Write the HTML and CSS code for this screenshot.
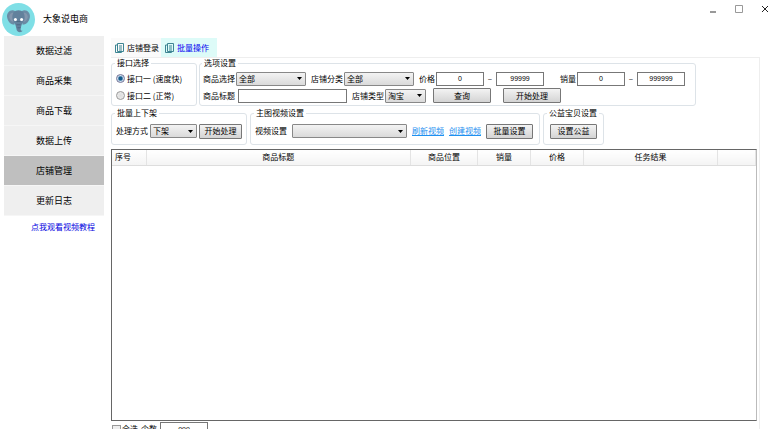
FILE: index.html
```html
<!doctype html>
<html lang="zh-CN">
  <head>
    <meta charset="UTF-8" />
    <meta name="viewport" content="width=device-width, initial-scale=1.0" />
    <title>大象说电商</title>
    <link rel="stylesheet" href="styles.css">
  </head>
  <body>
    <header class="titlebar">
      <svg class="logo" viewBox="0 0 32 32">
        <circle cx="16" cy="16" r="16" fill="#7fdfe6" />
        <path d="M13 8C9 5 4 9 5 14c1 5 4 7 7 7zM19 8c4-3 9 1 8 6-1 5-4 7-7 7z" fill="#6b8ba4" />
        <path d="M12 10c-3-2-5 1-5 4 1 3 3 5 5 4zM20 10c3-2 5 1 5 4-1 3-3 5-5 4z" fill="#8396ad" />
        <path d="M16 7c4 0 6 3 6 7 0 3-2 5-3 7l-1 4c0 2 1 2 2 2-1 2-6 2-6-2l-1-4c-1-2-3-4-3-7 0-4 2-7 6-7z" fill="#62819c" />
        <path d="M14 18h4M14 21h4M15 24h3" stroke="#4f6a84" fill="none" />
        <circle cx="13" cy="16" r="1.5" fill="#fff" />
        <circle cx="19" cy="16" r="1.5" fill="#fff" />
      </svg>
      <h1>大象说电商</h1>
      <div class="window-buttons">
        <button aria-label="最小化"><svg viewBox="0 0 8 8"><path d="M1 7h6" stroke-width="2" /></svg></button>
        <button aria-label="最大化"><svg viewBox="0 0 8 8"><path d="M.5.5h7v7h-7z" /></svg></button>
        <button class="close" aria-label="关闭"><svg viewBox="0 0 8 8"><path d="M1 1l6 6M7 1L1 7" /></svg></button>
      </div>
    </header>

    <div class="layout">
      <nav class="sidebar">
        <button>数据过滤</button>
        <button>商品采集</button>
        <button>商品下载</button>
        <button>数据上传</button>
        <button class="active">店铺管理</button>
        <button>更新日志</button>
        <a class="tutorial" href="#">点我观看视频教程</a>
      </nav>

      <main class="content">
        <div class="tabs">
          <button>
            <svg viewBox="0 0 9 10"><path d="M2.500.5h6v8h-6zM2.500 2h-2v7.500h6v-1M4 3h3M4 5h3M4 7h3" /></svg>店铺登录
          </button>
          <button class="active">
            <svg viewBox="0 0 9 10"><path d="M2.500.5h6v8h-6zM2.500 2h-2v7.500h6v-1M4 3h3M4 5h3M4 7h3" /></svg>批量操作
          </button>
        </div>

        <div class="panel">
          <div class="groups">
            <fieldset class="api">
              <legend>接口选择</legend>
              <label><input type="radio" name="api" checked />接口一 (速度快)</label>
              <label><input type="radio" name="api" />接口二 (正常)</label>
            </fieldset>
            <fieldset class="options">
              <legend>选项设置</legend>
              <div class="row">
                <label for="goods">商品选择</label>
                <select id="goods" class="md"><option>全部</option></select>
                <label class="gap-sm" for="category">店铺分类</label>
                <select id="category" class="md"><option>全部</option></select>
                <label class="gap-sm" for="priceMin">价格</label>
                <input type="text" id="priceMin" class="num" value="0" />
                <span class="dash">–</span>
                <input type="text" class="num" value="99999" aria-label="最高价格" />
                <label class="gap-lg" for="salesMin">销量</label>
                <input type="text" id="salesMin" class="num" value="0" />
                <span class="dash">–</span>
                <input type="text" class="num" value="999999" aria-label="最高销量" />
              </div>
              <div class="row">
                <label for="title">商品标题</label>
                <input type="text" id="title" class="title" />
                <label class="gap-sm" for="shopType">店铺类型</label>
                <select id="shopType" class="sm"><option>淘宝</option></select>
                <button class="btn wide">查询</button>
                <button class="btn wide gap-md">开始处理</button>
              </div>
            </fieldset>
          </div>

          <div class="groups second">
            <fieldset>
              <legend>批量上下架</legend>
              <div class="row">
                <label for="mode">处理方式</label>
                <select id="mode" class="mode"><option>下架</option></select>
                <button class="btn">开始处理</button>
              </div>
            </fieldset>
            <fieldset>
              <legend>主图视频设置</legend>
              <div class="row">
                <label for="video">视频设置</label>
                <select id="video" class="video"><option></option></select>
                <a class="link" href="#">刷新视频</a>
                <a class="link" href="#">创建视频</a>
                <button class="btn mid gap-sm">批量设置</button>
              </div>
            </fieldset>
            <fieldset>
              <legend>公益宝贝设置</legend>
              <div class="row">
                <button class="btn mid">设置公益</button>
              </div>
            </fieldset>
          </div>

          <div class="list">
            <table>
              <colgroup>
                <col class="c-index" />
                <col />
                <col class="c-place" />
                <col class="c-num" />
                <col class="c-num" />
                <col class="c-result" />
                <col class="c-end" />
              </colgroup>
              <thead>
                <tr>
                  <th class="left">序号</th>
                  <th>商品标题</th>
                  <th>商品位置</th>
                  <th>销量</th>
                  <th>价格</th>
                  <th>任务结果</th>
                  <th></th>
                </tr>
              </thead>
            </table>
          </div>

          <div class="row footer">
            <label><input type="checkbox" />全选</label>
            <label for="count">个数</label>
            <input type="text" id="count" class="num" value="999" />
          </div>
        </div>
      </main>
    </div>
  </body>
</html>
```
FILE: styles.css
```css
* {
  box-sizing: border-box;
}

body {
  display: flex;
  flex-direction: column;
  height: 100vh;
  margin: 0;
  overflow: hidden;
  background: #fff;
  color: #000;
  font: 8px/10px "Noto Sans CJK SC", sans-serif;
}

button,
input,
select {
  margin: 0;
  font: inherit;
  color: inherit;
}

.titlebar {
  display: flex;
  align-items: center;
  flex: none;
  height: 36px;
  padding: 2px 2px 0;
}

.logo {
  width: 33px;
  height: 33px;
}

.titlebar h1 {
  margin: 0 0 0 8px;
  font-size: 9px;
  font-weight: normal;
}

.window-buttons {
  display: flex;
  align-self: flex-start;
  gap: 18px;
  margin: 3px 3px 0 auto;
}

.window-buttons button {
  padding: 0;
  border: 0;
  background: none;
}

.window-buttons svg {
  display: block;
  width: 8px;
  height: 8px;
  fill: none;
  stroke: #999;
}

.window-buttons .close svg {
  stroke: #222;
}

.layout {
  display: flex;
  flex: 1;
  min-height: 0;
}

.sidebar {
  display: flex;
  flex-direction: column;
  flex: none;
  width: 100px;
  margin: 0 7px 0 4px;
}

.sidebar button {
  height: 30px;
  padding: 0;
  border: 0;
  border-bottom: 1px solid #f6f6f6;
  background: #efefef;
  font-size: 9px;
}

.sidebar button.active {
  background: #bfbfbf;
}

.tutorial {
  margin: 6px 9px 0 0;
  color: #0000e0;
  text-align: right;
  text-decoration: none;
}

.content {
  display: flex;
  flex-direction: column;
  flex: 1;
  min-width: 0;
  padding: 2px 14px 0 0;
}

.tabs {
  display: flex;
  flex: none;
}

.tabs button {
  display: flex;
  align-items: center;
  gap: 3px;
  width: 50px;
  height: 19px;
  padding: 0 0 0 4px;
  border: 0;
  background: #fafafa;
  white-space: nowrap;
}

.tabs button.active {
  width: 56px;
  background: #ddfbf8;
  color: #0000f0;
}

.tabs svg {
  flex: none;
  width: 9px;
  height: 10px;
  fill: none;
  stroke: #3d8593;
}

.panel {
  display: flex;
  flex-direction: column;
  flex: 1;
  min-height: 0;
  border: 1px solid #eee;
  border-width: 1px 1px 0 0;
}

.groups {
  display: flex;
  flex: none;
  gap: 2px;
}

.groups.second {
  gap: 3px;
  margin-top: 2px;
}

fieldset {
  min-width: 0;
  margin: 0;
  padding: 2px 4px 1px;
  border: 1px solid #dde3e8;
  border-radius: 3px;
}

.second fieldset {
  padding: 4px 4px 4px;
}

legend {
  margin-left: -1px;
  padding: 0 2px;
}

.api {
  width: 86px;
}

.api label {
  display: flex;
  align-items: center;
  gap: 2px;
  height: 17px;
  white-space: nowrap;
}

.api input {
  width: 9px;
  height: 9px;
  border: 1px solid #999;
  border-radius: 50%;
  background: radial-gradient(#ddd, #eee);
  appearance: none;
}

.api input:checked {
  border-color: #779;
  background: radial-gradient(#155c8c 30%, #cde 60%);
}

.options {
  padding-right: 10px;
  padding-left: 3px;
}

.row {
  display: flex;
  align-items: center;
  gap: 1px;
  white-space: nowrap;
}

.options .row {
  height: 17px;
}

.gap-sm {
  margin-left: 4px;
}

.gap-lg {
  margin-left: 15px;
}

select {
  height: 14px;
  padding: 0 12px 0 2px;
  border: 1px solid #888;
  border-radius: 1px;
  background: url("data:image/svg+xml,%3Csvg xmlns='http://www.w3.org/2000/svg' width='5' height='3'%3E%3Cpath d='M0 0h5L2.500 3z'/%3E%3C/svg%3E") right 3px center no-repeat, linear-gradient(#f3f3f3, #dadada);
  appearance: none;
}

select.md {
  width: 70px;
}

select.sm {
  width: 41px;
}

select.mode {
  width: 47px;
  margin: 0 1px;
}

select.video {
  width: 115px;
  margin-left: 4px;
}

input[type='text'] {
  height: 14px;
  padding: 0 2px;
  border: 1px solid #777;
  background: #fff;
}

input.num {
  width: 48px;
  font-family: "Liberation Sans", sans-serif;
  font-size: 7px;
  text-align: center;
}

.title {
  width: 109px;
  margin-left: 2px;
}

.dash {
  width: 10px;
  text-align: center;
}

.btn {
  width: 43px;
  height: 15px;
  padding: 0;
  border: 1px solid #777;
  border-radius: 1px;
  background: linear-gradient(#f3f3f3, #d4d4d4);
}

.btn.mid {
  width: 47px;
  margin: 0 2px;
}

.btn.mid.gap-sm {
  margin-left: 4px;
}

.btn.wide {
  width: 58px;
  margin-left: 6px;
}

.btn.gap-md {
  margin-left: 11px;
}

.second .row {
  height: 18px;
}

.link {
  margin-left: 4px;
  color: #1e90f0;
}

.list {
  flex: 1;
  min-height: 0;
  margin: 4px 2px 0 0;
  border: 1px solid #666;
  border-right-color: #bbb;
}

table {
  width: 100%;
  border-collapse: collapse;
  table-layout: fixed;
}

th {
  height: 15px;
  padding: 0 3px;
  border-right: 1px solid #e4e4e4;
  border-bottom: 1px solid #ddd;
  background: linear-gradient(#fff, #f4f4f4);
  font-weight: normal;
}

th.left {
  text-align: left;
}

.c-index {
  width: 34px;
}

.c-place {
  width: 67px;
}

.c-num {
  width: 53px;
}

.c-result {
  width: 134px;
}

.c-end {
  width: 38px;
}

/* the last row runs past the bottom edge of the window */
.footer {
  flex: none;
  height: 8px;
  align-items: flex-start;
  padding: 1px 1px 0;
}

.footer label {
  display: flex;
  align-items: center;
  gap: 1px;
  height: 14px;
  margin-right: 2px;
}

.footer input[type='checkbox'] {
  width: 9px;
  height: 9px;
  border: 1px solid #999;
  background: #eee;
  appearance: none;
}
```
